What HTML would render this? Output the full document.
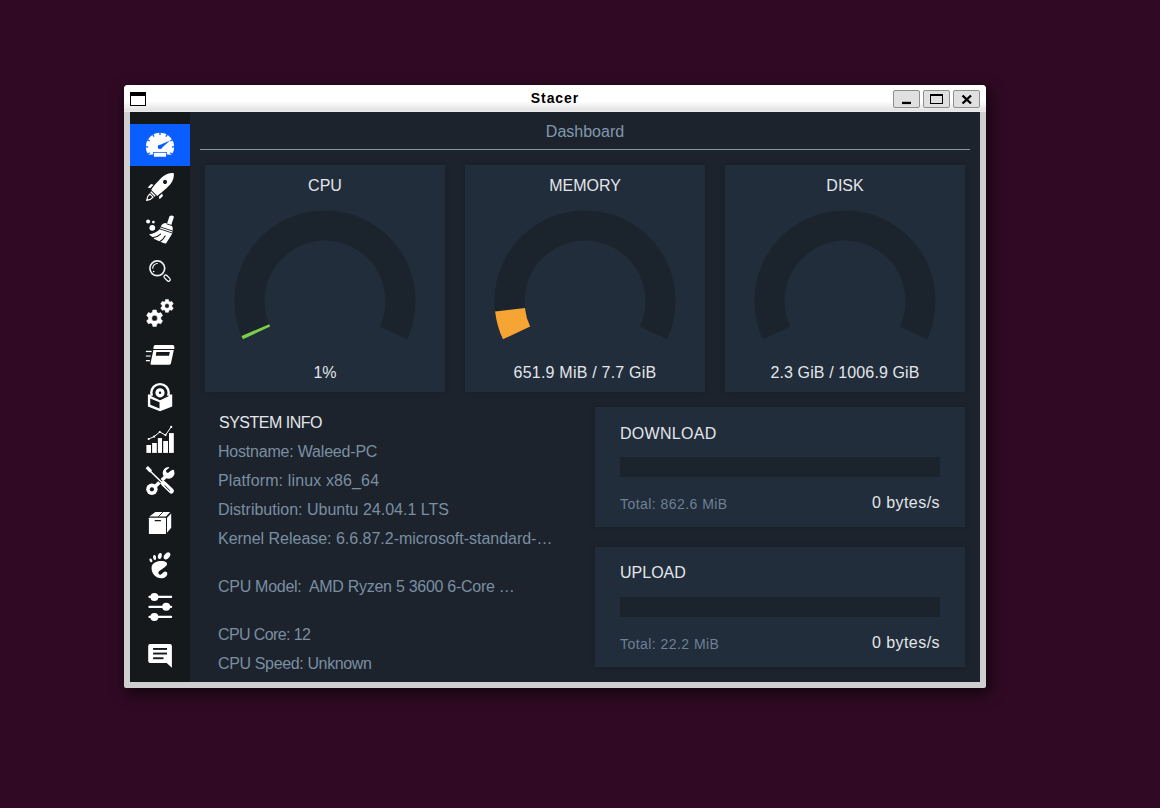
<!DOCTYPE html>
<html><head><meta charset="utf-8">
<style>
*{margin:0;padding:0;box-sizing:border-box}
html,body{width:1160px;height:808px;overflow:hidden;background:#300a24;font-family:"Liberation Sans",sans-serif}
.abs{position:absolute}
#shadow{left:124px;top:85px;width:862px;height:603px;border-radius:4px;background:#000;box-shadow:3px 5px 14px 2px rgba(0,0,0,0.55)}
#frame{left:124px;top:85px;width:862px;height:603px;background:#cfcfcf;border-radius:4px 4px 2px 2px}
#title{left:124px;top:85px;width:862px;height:27px;border-radius:4px 4px 0 0;background:linear-gradient(#ffffff 0px,#ffffff 16px,#e4e4e4 25px,#e6e6e6 26px,#f2f2f2 27px)}
#ttext{left:124px;top:90px;width:862px;text-align:center;font-weight:bold;font-size:14px;line-height:16px;color:#000;letter-spacing:0.95px;padding-left:0px}
.btn{top:90px;width:27px;height:18px;background:#e0e0e0;border:1px solid #8e8e8e;border-radius:2px}
#content{left:130px;top:112px;width:850px;height:570px;background:#1c232c}
#sidebar{left:130px;top:112px;width:60px;height:570px;background:#16191c}
#active{left:130px;top:124px;width:60px;height:42px;background:#0a5eff}
.t{position:absolute;white-space:nowrap;line-height:16px}
.card{position:absolute;background:#212d3a;box-shadow:0 0 6px rgba(0,0,0,0.14)}
</style></head>
<body>
<div id="shadow" class="abs"></div>
<div id="frame" class="abs"></div>
<div id="title" class="abs"></div>
<div id="ttext" class="abs">Stacer</div>
<!-- window icon -->
<div class="abs" style="left:130px;top:92px;width:16px;height:14px;border:1px solid #000;border-top:4px solid #000;background:#fff"></div>
<div class="btn abs" style="left:893px"></div>
<div class="btn abs" style="left:923px"></div>
<div class="btn abs" style="left:953px"></div>
<svg class="abs" style="left:893px;top:90px" width="27" height="18" viewBox="893 90 27 18"><rect x="902" y="101.8" width="9" height="2.3" fill="#000"/></svg>
<div class="abs" style="left:930px;top:94px;width:13px;height:10px;border:1px solid #000;border-top:2px solid #000"></div>
<svg class="abs" style="left:953px;top:90px" width="27" height="18" viewBox="953 90 27 18"><path d="M962.5 95.5 L971 103.5 M971 95.5 L962.5 103.5" stroke="#000" stroke-width="2.4"/></svg>

<div id="content" class="abs"></div>
<div id="sidebar" class="abs"></div>
<div id="active" class="abs"></div>

<!-- header -->
<div class="t" style="left:190px;top:124px;width:790px;text-align:center;font-size:16px;color:#8298ae">Dashboard</div>
<div class="abs" style="left:200px;top:149px;width:770px;height:1px;background:#8296a8"></div>

<!-- cards -->
<div class="card" style="left:205px;top:165px;width:240px;height:227px"></div>
<div class="card" style="left:465px;top:165px;width:240px;height:227px"></div>
<div class="card" style="left:725px;top:165px;width:240px;height:227px"></div>
<div class="t" style="left:205px;top:178px;width:240px;text-align:center;font-size:16px;color:#e3e6ea">CPU</div>
<div class="t" style="left:465px;top:178px;width:240px;text-align:center;font-size:16px;color:#e3e6ea">MEMORY</div>
<div class="t" style="left:725px;top:178px;width:240px;text-align:center;font-size:16px;color:#e3e6ea">DISK</div>
<div class="t" style="left:205px;top:365px;width:240px;text-align:center;font-size:16px;color:#e3e6ea">1%</div>
<div class="t" style="left:465px;top:365px;width:240px;text-align:center;font-size:16px;color:#e3e6ea" ><span style="letter-spacing:0.22px">651.9 MiB / 7.7 GiB</span></div>
<div class="t" style="left:725px;top:365px;width:240px;text-align:center;font-size:16px;color:#e3e6ea"><span style="letter-spacing:0.12px">2.3 GiB / 1006.9 GiB</span></div>

<svg class="abs" style="left:0;top:0" width="1160" height="808" viewBox="0 0 1160 808" id="gauges">
<path d="M242.98 339.25A90.5 90.5 0 1 1 407.02 339.25L379.83 326.57A60.5 60.5 0 1 0 270.17 326.57Z" fill="#1b232d"/>
<path d="M242.98 339.25A90.5 90.5 0 0 1 241.51 335.92L269.19 324.35A60.5 60.5 0 0 0 270.17 326.57Z" fill="#7ccf48"/>
<path d="M502.98 339.25A90.5 90.5 0 1 1 667.02 339.25L639.83 326.57A60.5 60.5 0 1 0 530.17 326.57Z" fill="#1b232d"/>
<path d="M502.98 339.25A90.5 90.5 0 0 1 495.10 311.40L524.90 307.95A60.5 60.5 0 0 0 530.17 326.57Z" fill="#f6a433"/>
<path d="M762.98 339.25A90.5 90.5 0 1 1 927.02 339.25L899.83 326.57A60.5 60.5 0 1 0 790.17 326.57Z" fill="#1b232d"/>
</svg>

<!-- system info -->
<div class="t" style="left:219px;top:415px;font-size:16px;color:#e3e6ea;letter-spacing:-0.5px">SYSTEM INFO</div>
<div class="t" style="left:218px;top:444px;font-size:16px;color:#7b8ea2;letter-spacing:-0.2px">Hostname: Waleed-PC</div>
<div class="t" style="left:218px;top:473px;font-size:16px;color:#7b8ea2;letter-spacing:0.13px">Platform: linux x86_64</div>
<div class="t" style="left:218px;top:502px;font-size:16px;color:#7b8ea2">Distribution: Ubuntu 24.04.1 LTS</div>
<div class="t" style="left:218px;top:531px;font-size:16px;color:#7b8ea2;letter-spacing:-0.02px">Kernel Release: 6.6.87.2-microsoft-standard-…</div>
<div class="t" style="left:218px;top:579px;font-size:16px;color:#7b8ea2;letter-spacing:-0.28px">CPU Model:&nbsp; AMD Ryzen 5 3600 6-Core …</div>
<div class="t" style="left:218px;top:627px;font-size:16px;color:#7b8ea2;letter-spacing:-0.6px">CPU Core: 12</div>
<div class="t" style="left:218px;top:656px;font-size:16px;color:#7b8ea2;letter-spacing:-0.36px">CPU Speed: Unknown</div>

<!-- network -->
<div class="card" style="left:595px;top:407px;width:370px;height:120px"></div>
<div class="card" style="left:595px;top:547px;width:370px;height:120px"></div>
<div class="abs" style="left:620px;top:457px;width:320px;height:20px;background:#1b232c"></div>
<div class="abs" style="left:620px;top:597px;width:320px;height:20px;background:#1b232c"></div>
<div class="t" style="left:620px;top:426px;font-size:16px;color:#e3e6ea;letter-spacing:0.3px">DOWNLOAD</div>
<div class="t" style="left:620px;top:565px;font-size:16px;color:#e3e6ea;letter-spacing:0px">UPLOAD</div>
<div class="t" style="left:620px;top:496px;font-size:14px;color:#6d8095;letter-spacing:0.45px">Total: 862.6 MiB</div>
<div class="t" style="left:620px;top:636px;font-size:14px;color:#6d8095;letter-spacing:0.45px">Total: 22.2 MiB</div>
<div class="t" style="left:740px;top:495px;width:200px;text-align:right;font-size:16px;color:#e3e6ea;letter-spacing:0.45px">0 bytes/s</div>
<div class="t" style="left:740px;top:635px;width:200px;text-align:right;font-size:16px;color:#e3e6ea;letter-spacing:0.45px">0 bytes/s</div>

<!-- sidebar icons -->
<svg class="abs" style="left:130px;top:112px" width="60" height="570" viewBox="130 112 60 570" id="icons" fill="#fff">
<circle cx="160" cy="146.9" r="14.1" fill="#fff"/>
<rect x="140" y="154.6" width="40" height="10" fill="#0a5eff"/>
<rect x="152.9" y="151.9" width="14.2" height="6" rx="0.8" fill="#0a5eff"/>
<rect x="153.9" y="152.8" width="12.2" height="4" rx="0.5" fill="#fff"/>
<line x1="160.00" y1="131.80" x2="160.00" y2="135.00" stroke="#0a5eff" stroke-width="1.3"/>
<line x1="167.55" y1="133.82" x2="165.95" y2="136.59" stroke="#0a5eff" stroke-width="1.3"/>
<line x1="152.45" y1="133.82" x2="154.05" y2="136.59" stroke="#0a5eff" stroke-width="1.3"/>
<line x1="173.08" y1="139.35" x2="170.31" y2="140.95" stroke="#0a5eff" stroke-width="1.3"/>
<line x1="146.92" y1="139.35" x2="149.69" y2="140.95" stroke="#0a5eff" stroke-width="1.3"/>
<line x1="175.10" y1="146.90" x2="171.90" y2="146.90" stroke="#0a5eff" stroke-width="1.3"/>
<line x1="144.90" y1="146.90" x2="148.10" y2="146.90" stroke="#0a5eff" stroke-width="1.3"/>
<line x1="173.08" y1="154.45" x2="170.31" y2="152.85" stroke="#0a5eff" stroke-width="1.3"/>
<line x1="146.92" y1="154.45" x2="149.69" y2="152.85" stroke="#0a5eff" stroke-width="1.3"/>
<circle cx="159.9" cy="146.9" r="2.2" fill="#0a5eff"/>
<path d="M158.6 145.4 L170 140.4 L161.2 148.4 Z" fill="#0a5eff"/>
<g transform="translate(161.5 185.5) rotate(45)"><path d="M-4.4 9.6 Q-4.4 10.4 -3.6 10.4 L3.6 10.4 Q4.4 10.4 4.4 9.6 C5.3 4 5.6 -3 5.4 -6.5 C5 -11.5 3 -15 0 -17.4 C-3 -15 -5 -11.5 -5.4 -6.5 C-5.6 -3 -5.3 4 -4.4 9.6 Z" fill="#fff"/><circle cx="0" cy="-5" r="2" fill="#16191c"/><path d="M-8.4 6.4 L-6.1 5.2 L-6.1 9.9 L-8.4 11.1 Z M8.4 6.4 L6.1 5.2 L6.1 9.9 L8.4 11.1 Z" fill="#fff"/><rect x="-3.1" y="11.4" width="6.2" height="1.4" fill="#fff"/><path d="M-2.3 14.2 L2.3 14.2 C2.6 16.5 1.6 19 0 21 C-1.6 19 -2.6 16.5 -2.3 14.2 Z" fill="none" stroke="#fff" stroke-width="1.2" stroke-linejoin="round"/></g>
<circle cx="148.1" cy="221.5" r="2" fill="#fff"/><circle cx="153.4" cy="222.1" r="1.35" fill="#fff"/><circle cx="152.3" cy="227.8" r="2.9" fill="#fff"/>
<path d="M169.5 216.2 Q171.9 214.4 174 216.8 L171.2 225.3 L166.9 223.9 Z" fill="#fff"/>
<path d="M161.2 225.8 C162 222.6 167.5 222 170.8 224.3 C172.5 225.6 173 228 172.7 230.6 L172 234 L166 243.4 C164 243.5 162 242.8 160.2 241.6 C158.6 241.2 156.5 240 154.6 239.3 C153.8 238.6 153.6 238 153.3 237.5 C151.6 236.8 150.2 235.6 149.2 234.3 C153 234 156.5 232.5 159.8 229.3 Z" fill="#fff"/>
<path d="M166.4 223.7 L171.9 225.6 M160.2 226.9 L172.9 231.1 M159.8 228.9 L172.5 233.1" fill="none" stroke="#16191c" stroke-width="0.9"/>
<path d="M153.2 237.5 C155.8 237.3 158.4 236.2 160.6 234.1 M159.9 241.5 C162 240.3 163.8 238.4 165.1 235.9" fill="none" stroke="#16191c" stroke-width="1.1" stroke-linecap="round"/>
<circle cx="157.3" cy="268.3" r="7.4" fill="none" stroke="#eee" stroke-width="1.7"/>
<path d="M157.8 263.5 A4.8 4.8 0 0 0 152.7 268.6" fill="none" stroke="#fff" stroke-width="1.2"/>
<circle cx="153.7" cy="271.5" r="0.8" fill="#fff"/>
<g transform="translate(167.1 278.1) rotate(45)"><rect x="-3.7" y="-1.7" width="7.4" height="3.4" rx="1.7" fill="none" stroke="#fff" stroke-width="1.2"/></g>
<path d="M152.36 312.31 L152.84 309.99 L156.36 309.99 L156.84 312.31 L158.58 313.31 L160.83 312.57 L162.59 315.62 L160.82 317.20 L160.82 319.20 L162.59 320.78 L160.83 323.83 L158.58 323.09 L156.84 324.09 L156.36 326.41 L152.84 326.41 L152.36 324.09 L150.62 323.09 L148.37 323.83 L146.61 320.78 L148.38 319.20 L148.38 317.20 L146.61 315.62 L148.37 312.57 L150.62 313.31Z M157.50 318.20 A2.9 2.9 0 1 0 151.70 318.20 A2.9 2.9 0 1 0 157.50 318.20Z" fill="#fff" fill-rule="evenodd" stroke="#fff" stroke-width="0.5" stroke-linejoin="round"/>
<path d="M165.11 301.38 L165.58 299.45 L168.42 299.45 L168.89 301.38 L169.97 302.00 L171.87 301.45 L173.29 303.90 L171.86 305.28 L171.86 306.52 L173.29 307.90 L171.87 310.35 L169.97 309.80 L168.89 310.42 L168.42 312.35 L165.58 312.35 L165.11 310.42 L164.03 309.80 L162.13 310.35 L160.71 307.90 L162.14 306.52 L162.14 305.28 L160.71 303.90 L162.13 301.45 L164.03 302.00Z M169.30 305.90 A2.3 2.3 0 1 0 164.70 305.90 A2.3 2.3 0 1 0 169.30 305.90Z" fill="#fff" fill-rule="evenodd" stroke="#fff" stroke-width="0.5" stroke-linejoin="round"/>
<path d="M155.2 345.1 L172.6 345.1 Q174.3 345.1 174.3 346.8 L174.3 348.9 L153.4 348.9 L153.6 346.8 Q153.8 345.1 155.2 345.1Z" fill="#fff"/>
<path d="M153.4 350.1 L173.8 350.1 L170.9 363.6 Q170.6 364.7 169.5 364.7 L151.5 364.7 Q150.3 364.7 150.5 363.5 Z" fill="#fff"/>
<path d="M156.3 352.1 L169.8 352.1 L169 355.8 L155.8 355.8 Z" fill="#16191c"/>
<rect x="145.9" y="350.8" width="5.7" height="1.3" fill="#fff"/><rect x="145.9" y="355.4" width="4.8" height="1.3" fill="#fff" opacity="0.85"/><rect x="145.9" y="360" width="4" height="1.3" fill="#fff"/>
<circle cx="160" cy="392.8" r="9.9" fill="#fff"/>
<circle cx="160" cy="392.8" r="7.5" fill="#16191c"/>
<circle cx="160" cy="392.8" r="4.6" fill="#fff"/>
<circle cx="160" cy="392.8" r="1.2" fill="#16191c"/>
<path d="M147.9 394.6 L150.8 394.6 L160 399.9 L169.2 394.6 L172.2 394.6 L172.2 406.4 L160 411.3 L147.9 406.4 Z" fill="#fff"/>
<path d="M151.6 395.8 L160 399.5 L168.4 395.8" fill="none" stroke="#16191c" stroke-width="1.2"/>
<path d="M150.2 398.4 L159.5 402.2 L159.5 408.4 L150.3 404.7 Z" fill="#16191c"/>
<rect x="146.4" y="445" width="4.6" height="7.9" fill="#fff"/>
<rect x="152.1" y="443" width="4.7" height="9.9" fill="#fff"/>
<rect x="157.9" y="438.1" width="4.1" height="14.8" fill="#fff"/>
<rect x="163.2" y="441" width="4.8" height="11.9" fill="#fff"/>
<rect x="169" y="433.1" width="4.8" height="19.8" fill="#fff"/>
<polyline points="148.7,439 154.1,436.6 159.8,432 165.5,435.1 171.2,426.9" fill="none" stroke="#fff" stroke-width="1"/>
<circle cx="148.7" cy="439" r="1.1" fill="#fff"/>
<circle cx="154.1" cy="436.6" r="1.1" fill="#fff"/>
<circle cx="159.8" cy="432" r="1.1" fill="#fff"/>
<circle cx="165.5" cy="435.1" r="1.1" fill="#fff"/>
<circle cx="171.2" cy="426.9" r="1.1" fill="#fff"/>
<g><line x1="166" y1="476.2" x2="152.5" y2="489" stroke="#fff" stroke-width="3.6"/><circle cx="151.9" cy="489.3" r="5.7" fill="#fff"/><circle cx="151.9" cy="489.3" r="2.1" fill="#16191c"/><circle cx="168.6" cy="472.9" r="5.9" fill="#fff"/><g transform="translate(167.4 471.4) rotate(50)"><path d="M-1.6 0.6 L-1.7 -3 L-3.2 -9 L3.2 -9 L1.7 -3 L1.6 0.6 Q0 2 -1.6 0.6 Z" fill="#16191c"/></g><line x1="148.6" y1="469.6" x2="161.5" y2="482.1" stroke="#16191c" stroke-width="3.4"/><line x1="148.5" y1="469.5" x2="163" y2="483.5" stroke="#fff" stroke-width="1.6"/><path d="M145.6 468.2 L147.9 465.9 L151.8 469.9 L151.6 471 L150.3 472.3 L149.4 472.2 Z" fill="#fff"/><line x1="163.4" y1="483.4" x2="171.3" y2="490.9" stroke="#fff" stroke-width="5.2" stroke-linecap="round"/><line x1="164.6" y1="485.4" x2="169.9" y2="490.6" stroke="#16191c" stroke-width="1"/></g>
<rect x="148.9" y="517.8" width="17.1" height="16.1" rx="0.5" fill="#fff"/>
<rect x="154.6" y="520.1" width="6.4" height="1.1" rx="0.5" fill="#16191c"/>
<path d="M149.4 516.6 L155.3 512.1 L157.6 512.1 L162.6 512.1 L170.2 512.1 L166 516.6 Z" fill="#fff"/>
<line x1="158.2" y1="516.8" x2="162.9" y2="512.1" stroke="#16191c" stroke-width="0.9"/>
<path d="M167 517.8 L171.2 513.4 L171.2 527.7 L167 532.7 Z" fill="#fff"/>
<ellipse cx="167" cy="555.9" rx="2.6" ry="4" transform="rotate(40 167 555.9)" fill="#fff"/>
<ellipse cx="159.8" cy="556" rx="1.9" ry="3" transform="rotate(12 159.8 556)" fill="#fff"/>
<ellipse cx="154.6" cy="557.5" rx="1.5" ry="2.5" transform="rotate(-10 154.6 557.5)" fill="#fff"/>
<ellipse cx="150.9" cy="560.3" rx="1.3" ry="2" transform="rotate(-30 150.9 560.3)" fill="#fff"/>
<path d="M151.6 567 C152.2 562.8 157 561 161.5 561 C165.5 561 168.3 562.5 166.5 565.5 C165 567.8 161 569.5 159 571.3 C157.8 572.5 158.2 574.6 160 574.7 C161.5 574.8 162.3 573.2 163.5 572.2 C165 571 167.3 571.6 167.3 573.8 C167.2 576.5 164.5 578.3 161.5 578.3 C155.5 578.3 151 573 151.6 567 Z" fill="#fff"/>
<rect x="148.4" y="595.8" width="23.8" height="2.2" rx="1" fill="#fff"/>
<circle cx="154.4" cy="596.9" r="4" fill="#fff"/>
<rect x="148.4" y="605.7" width="23.8" height="2.2" rx="1" fill="#fff"/>
<circle cx="166.2" cy="606.8" r="4" fill="#fff"/>
<rect x="148.4" y="615.8" width="23.8" height="2.2" rx="1" fill="#fff"/>
<circle cx="154.4" cy="616.9" r="4" fill="#fff"/>
<path d="M150.2 643.9 L169.9 643.9 Q171.9 643.9 171.9 645.9 L171.9 667.7 L166.7 663 L150.2 663 Q148.2 663 148.2 661 L148.2 645.9 Q148.2 643.9 150.2 643.9 Z" fill="#fff"/>
<rect x="153.1" y="648" width="13.9" height="1.9" fill="#16191c"/>
<rect x="153.1" y="652.6" width="13.9" height="1.9" fill="#16191c"/>
<rect x="153.1" y="657.3" width="10.4" height="1.9" fill="#16191c"/>
</svg>
</body></html>
